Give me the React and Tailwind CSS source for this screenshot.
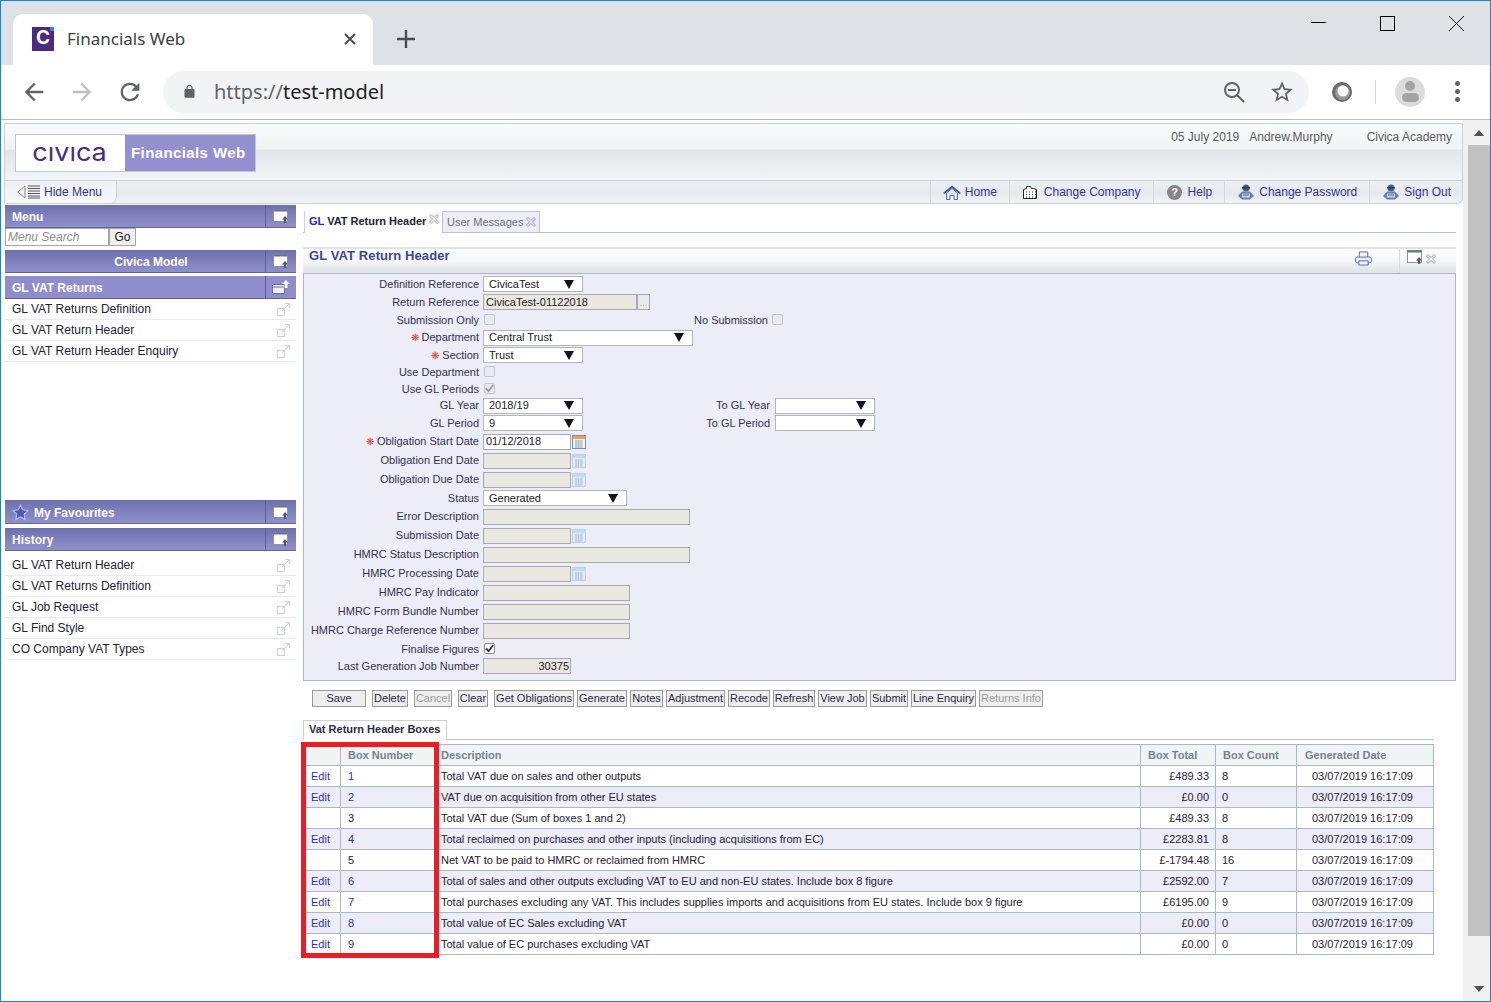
import React from "react";

const Ic = ({ d, className, fill = "currentColor" }) => (
  <svg viewBox="0 0 24 24" className={className} fill={fill}>
    <path d={d} />
  </svg>
);

const back = "M20 11H7.83l5.59-5.59L12 4l-8 8 8 8 1.41-1.41L7.83 13H20v-2z";
const forward = "M4 11h12.17l-5.59-5.59L12 4l8 8-8 8-1.41-1.41L16.17 13H4v-2z";
const reload = "M17.65 6.35C16.2 4.9 14.21 4 12 4c-4.42 0-7.99 3.58-7.99 8s3.57 8 7.99 8c3.73 0 6.84-2.55 7.73-6h-2.08c-.82 2.33-3.04 4-5.65 4-3.31 0-6-2.69-6-6s2.69-6 6-6c1.66 0 3.14.69 4.22 1.78L13 11h7V4l-2.35 2.35z";
const lock = "M18 8h-1V6c0-2.76-2.24-5-5-5S7 3.24 7 6v2H6c-1.1 0-2 .9-2 2v10c0 1.1.9 2 2 2h12c1.1 0 2-.9 2-2V10c0-1.1-.9-2-2-2zM9 6c0-1.66 1.34-3 3-3s3 1.34 3 3v2H9V6z";
const star = "M22 9.24l-7.19-.62L12 2 9.19 8.63 2 9.24l5.46 4.73L5.82 21 12 17.27 18.18 21l-1.63-7.03L22 9.24zM12 15.4l-3.76 2.27 1-4.28-3.32-2.88 4.38-.38L12 6.1l1.71 4.04 4.38.38-3.32 2.88 1 4.28L12 15.4z";

const WindowIcon = ({ flip }) => (
  <svg viewBox="0 0 16 14" className="w-[16px] h-[14px]">
    <rect x="0.5" y="0.5" width="14" height="12" fill="#fff" stroke="#8a8fa8" />
    <rect x="0.5" y="0.5" width="14" height="2" fill="#6b7088" />
    <path d={flip ? "M11 7v3H9l3 4 3-4h-2V7z" : "M12 7l3 3.500h-2V14h-2v-3.500H9z"} fill="#4d5878" />
  </svg>
);

const CloseX = ({ color = "#93a3bf" }) => (
  <svg viewBox="0 0 10 10" className="w-[10px] h-[10px] shrink-0" fill="none" stroke={color} strokeWidth="1">
    <path d="M2 .5L5 3.500 8 .5 9.500 2 6.500 5 9.500 8 8 9.500 5 6.500 2 9.500 .5 8 3.500 5 .5 2z" />
  </svg>
);

const ExtLink = () => (
  <svg viewBox="0 0 13 13" className="w-[13px] h-[13px] shrink-0" fill="none" stroke="#c8d3dd">
    <rect x="0.5" y="5.500" width="7" height="7" />
    <path d="M5 8L12 1M8 .5h4.500V5" />
  </svg>
);

const CalIcon = ({ on }) => (
  <svg viewBox="0 0 14 14" className="w-[14px] h-[14px] ml-[1px] shrink-0">
    <rect x="0.5" y="0.5" width="13" height="13" fill={on ? "#f4f6fa" : "#dfe9f8"} stroke={on ? "#6f93c6" : "#bcd0ee"} />
    <rect x="1" y="1" width="12" height="3" fill={on ? "#f0a050" : "#c6d8f2"} />
    <path d="M3 6h8M3 8h8M3 10h8M3 12h8M4 5v8M6.500 5v8M9 5v8" stroke={on ? "#9aa4b4" : "#b4c2d4"} strokeWidth="0.7" fill="none" />
  </svg>
);

const Person = () => (
  <svg viewBox="0 0 18 16" className="w-[18px] h-[16px]">
    <circle cx="9" cy="4" r="3.500" fill="#4d5a80" />
    <path d="M5 3h8v1.500H5z" fill="#2f3a5c" />
    <path d="M1 12l4-4.500h8l4 4.500-4 3.500H5z" fill="#6e7ea8" />
    <path d="M5 9.500h8v4H5z" fill="#cdd5e6" />
    <path d="M6 11h6" stroke="#4d5a80" />
  </svg>
);

const navItems = [
  {
    label: "Home",
    icon: (
      <svg viewBox="0 0 18 15" className="w-[18px] h-[15px]">
        <path d="M0 8l9-7.500L18 8l-1.500 1L9 3 1.500 9z" fill="#46558a" />
        <path d="M3.500 8L9 3.500 14.500 8v6.500h-3.500v-4H7v4H3.500z" fill="#dfe6f2" stroke="#5c6c9c" />
      </svg>
    ),
  },
  {
    label: "Change Company",
    icon: (
      <svg viewBox="0 0 15 14" className="w-[15px] h-[14px]" fill="#fff" stroke="#222">
        <path d="M.5 13.500v-9l3-1v-2h4l1 2h2l3 1v9z" />
        <path d="M3 7h1M6 7h1M9 7h1M12 7h1M3 9.500h1M6 9.500h1M9 9.500h1M12 9.500h1M3 12h1M6 12h1M9 12h1M12 12h1" />
      </svg>
    ),
  },
  {
    label: "Help",
    icon: (
      <span className="w-[15px] h-[15px] rounded-full bg-[#85858a] text-white text-[11px] font-bold flex items-center justify-center">?</span>
    ),
  },
  { label: "Change Password", icon: <Person /> },
  { label: "Sign Out", icon: <Person /> },
];

const menuItems = ["GL VAT Returns Definition", "GL VAT Return Header", "GL VAT Return Header Enquiry"];
const historyItems = ["GL VAT Return Header", "GL VAT Returns Definition", "GL Job Request", "GL Find Style", "CO Company VAT Types"];

const purple = "bg-[linear-gradient(#6e70ad,#8f8fcb)] border-b border-[#62649f]";

function SideHead({ title, height, center, leading, lightBg, icon }) {
  return (
    <div className={`${height} flex items-center text-white font-bold text-[12px] ${lightBg ? "bg-[#908dcc] border-b border-[#62649f]" : purple}`}>
      <div className={`flex-1 flex items-center gap-[5px] pt-[2px] ${center ? "justify-center pl-[32px]" : "pl-[7px]"}`}>
        {leading}
        {title}
      </div>
      <div className="w-[31px] h-full border-l border-[#5d5f9c] flex items-center justify-center">{icon || <WindowIcon />}</div>
    </div>
  );
}

function ItemList({ items }) {
  return (
    <div>
      {items.map((t) => (
        <div key={t} className="h-[21px] flex items-center justify-between pl-[7px] pr-[6px] border-b border-[#e6eaed] text-[#222233]">
          <span>{t}</span>
          <ExtLink />
        </div>
      ))}
    </div>
  );
}

const Select = ({ value, width }) => (
  <div className={`${width} h-[16px] bg-white border border-[#b4b4bc] flex items-center justify-between pl-[5px] pr-[8px] text-[#222]`}>
    <span>{value}</span>
    <svg viewBox="0 0 10 9" className="w-[10px] h-[9px]"><path d="M0 0h10L5 9z" fill="#111122" /></svg>
  </div>
);

const Input = ({ width, value, right, enabled }) => (
  <div className={`${width} h-[16px] border border-[#aaaaaa] flex items-center px-[2px] text-[#222] ${enabled ? "bg-white" : "bg-[#e9e8e1]"} ${right ? "justify-end pr-[1px]" : ""}`}>
    {value}
  </div>
);

const Check = ({ checked, strong }) => (
  <div className={`w-[11px] h-[11px] ml-[1px] mb-[2px] rounded-[2px] border flex items-center justify-center ${strong ? "bg-white border-[#888]" : "bg-[#e9e9f0] border-[#c4c4cc]"}`}>
    {checked && (
      <svg viewBox="0 0 10 10" className="w-[9px] h-[9px]" fill="none" stroke={strong ? "#333" : "#999"} strokeWidth="2"><path d="M1 5l3 3 5-7" /></svg>
    )}
  </div>
);

const DateField = ({ value, on }) => (
  <div className="flex items-center">
    <Input width="w-[88px]" value={value} enabled={on} />
    <CalIcon on={on} />
  </div>
);

const rows = [
  { h: "h-[18px]", label: "Definition Reference", field: <Select value="CivicaTest" width="w-[100px]" /> },
  {
    h: "h-[18px]",
    label: "Return Reference",
    field: (
      <div className="flex">
        <Input width="w-[154px]" value="CivicaTest-01122018" />
        <div className="w-[13px] h-[16px] border border-[#aaa] bg-[#e9e9ee] text-[#999] text-[9px] leading-[16px] text-center">...</div>
      </div>
    ),
  },
  { h: "h-[18px]", label: "Submission Only", field: <Check />, second: "No Submission", secondW: "w-[114px] mr-[3px]", secondField: <Check /> },
  { h: "h-[17px]", label: "Department", req: true, field: <Select value="Central Trust" width="w-[210px]" /> },
  { h: "h-[18px]", label: "Section", req: true, field: <Select value="Trust" width="w-[100px]" /> },
  { h: "h-[17px]", label: "Use Department", field: <Check /> },
  { h: "h-[16px]", label: "Use GL Periods", field: <Check checked /> },
  { h: "h-[17px]", label: "GL Year", field: <Select value="2018/19" width="w-[100px]" />, second: "To GL Year", secondW: "w-[116px] mr-[5px]", secondField: <Select value="" width="w-[100px]" /> },
  { h: "h-[18px]", label: "GL Period", field: <Select value="9" width="w-[100px]" />, second: "To GL Period", secondW: "w-[116px] mr-[5px]", secondField: <Select value="" width="w-[100px]" /> },
  { h: "h-[19px]", label: "Obligation Start Date", req: true, field: <DateField value="01/12/2018" on /> },
  { h: "h-[19px]", label: "Obligation End Date", field: <DateField /> },
  { h: "h-[19px]", label: "Obligation Due Date", field: <DateField /> },
  { h: "h-[18px]", label: "Status", field: <Select value="Generated" width="w-[144px]" /> },
  { h: "h-[19px]", label: "Error Description", field: <Input width="w-[207px]" /> },
  { h: "h-[19px]", label: "Submission Date", field: <DateField /> },
  { h: "h-[19px]", label: "HMRC Status Description", field: <Input width="w-[207px]" /> },
  { h: "h-[19px]", label: "HMRC Processing Date", field: <DateField /> },
  { h: "h-[19px]", label: "HMRC Pay Indicator", field: <Input width="w-[147px]" /> },
  { h: "h-[19px]", label: "HMRC Form Bundle Number", field: <Input width="w-[147px]" /> },
  { h: "h-[19px]", label: "HMRC Charge Reference Number", field: <Input width="w-[147px]" /> },
  { h: "h-[18px]", label: "Finalise Figures", field: <Check checked strong /> },
  { h: "h-[16px]", label: "Last Generation Job Number", field: <Input width="w-[88px]" value="30375" right /> },
];

const buttons = [
  { t: "Save", w: "w-[54px] mr-[6px]" },
  { t: "Delete", w: "w-[36px] mr-[6px]" },
  { t: "Cancel", w: "w-[38px] mr-[6px]", off: true },
  { t: "Clear", w: "w-[30px] mr-[6px]" },
  { t: "Get Obligations", w: "w-[80px] mr-[3px]" },
  { t: "Generate", w: "w-[50px] mr-[3px]" },
  { t: "Notes", w: "w-[33px] mr-[3px]" },
  { t: "Adjustment", w: "w-[59px] mr-[3px]" },
  { t: "Recode", w: "w-[42px] mr-[3px]" },
  { t: "Refresh", w: "w-[42px] mr-[3px]" },
  { t: "View Job", w: "w-[49px] mr-[3px]" },
  { t: "Submit", w: "w-[38px] mr-[3px]" },
  { t: "Line Enquiry", w: "w-[65px] mr-[3px]" },
  { t: "Returns Info", w: "w-[64px]", off: true },
];

const boxes = [
  { n: 1, edit: true, d: "Total VAT due on sales and other outputs", t: "£489.33", c: 8 },
  { n: 2, edit: true, d: "VAT due on acquisition from other EU states", t: "£0.00", c: 0 },
  { n: 3, d: "Total VAT due (Sum of boxes 1 and 2)", t: "£489.33", c: 8 },
  { n: 4, edit: true, d: "Total reclaimed on purchases and other inputs (including acquisitions from EC)", t: "£2283.81", c: 8 },
  { n: 5, d: "Net VAT to be paid to HMRC or reclaimed from HMRC", t: "£-1794.48", c: 16 },
  { n: 6, edit: true, d: "Total of sales and other outputs excluding VAT to EU and non-EU states. Include box 8 figure", t: "£2592.00", c: 7 },
  { n: 7, edit: true, d: "Total purchases excluding any VAT. This includes supplies imports and acquisitions from EU states. Include box 9 figure", t: "£6195.00", c: 9 },
  { n: 8, edit: true, d: "Total value of EC Sales excluding VAT", t: "£0.00", c: 0 },
  { n: 9, edit: true, d: "Total value of EC purchases excluding VAT", t: "£0.00", c: 0 },
];

const th = "border border-[#aab8c4] font-bold text-left text-[#75838f] text-[11px]";
const td = "border border-[#aab8c4] text-[#222233] text-[11px]";

export default function App() {
  return (
    <div className="w-[1491px] h-[1002px] overflow-hidden border border-[#1a86d0] bg-white flex flex-col [font-family:Liberation_Sans,Arial,sans-serif] text-[12px]">
      {/* browser tabs */}
      <div className="h-[64px] shrink-0 bg-[#dee1e6] flex items-end pl-[12px] relative">
        <div className="w-[360px] h-[51px] bg-white rounded-t-[10px] flex items-center pl-[19px] pr-[16px] [font-family:Noto_Sans,sans-serif] text-[#3c4043] text-[17px]">
          <div className="w-[22px] h-[24px] bg-[#4b2a80] flex items-center justify-center text-white [font-family:Inter,sans-serif] font-bold text-[19px] mr-[13px] mb-[2px] relative">
            C
            <span className="absolute right-0 top-0 w-[4px] h-[4px] bg-[#2b8fd8]"></span>
          </div>
          <span className="flex-1 mb-[1px]">Financials Web</span>
          <svg viewBox="0 0 12 12" className="w-[12px] h-[12px] mr-[1px] mb-[1px]" stroke="#4a4d51" strokeWidth="2"><path d="M1 1l10 10M11 1L1 11" /></svg>
        </div>
        <svg viewBox="0 0 18 18" className="w-[18px] h-[18px] ml-[24px] mb-[17px]" stroke="#4a4d51" strokeWidth="2.400"><path d="M9 0v18M0 9h18" /></svg>
        <div className="flex-1"></div>
        <div className="flex items-start self-start mt-[15px] pr-[26px]">
          <div className="w-[15px] h-[1px] bg-black mt-[6px]"></div>
          <div className="w-[15px] h-[15px] border border-black ml-[54px]"></div>
          <svg viewBox="0 0 15 15" className="w-[15px] h-[15px] ml-[54px]" stroke="#111" fill="none"><path d="M0 0l15 15M15 0L0 15" /></svg>
        </div>
      </div>

      {/* browser toolbar */}
      <div className="h-[55px] shrink-0 border-b border-[#b9bcc0] flex items-center pl-[9px] pb-[1px]">
        <div className="w-[48px] flex justify-center"><Ic d={back} className="w-[28px] h-[28px] text-[#5f6368]" /></div>
        <div className="w-[48px] flex justify-center"><Ic d={forward} className="w-[28px] h-[28px] text-[#bdc1c6]" /></div>
        <div className="w-[48px] flex justify-center"><Ic d={reload} className="w-[28px] h-[28px] text-[#5f6368]" /></div>
        <div className="ml-[9px] w-[1146px] h-[42px] rounded-full bg-[#f1f3f4] flex items-center pl-[19px] pr-[14px]">
          <Ic d={lock} className="w-[15px] h-[17px] text-[#5f6368] mr-[17px]" />
          <span className="flex-1 [font-family:Noto_Sans,sans-serif] text-[20px] pt-[1px] text-[#202124]"><span className="text-[#5f6368]">https://</span>test-model</span>
          <svg viewBox="0 0 22 22" className="w-[22px] h-[22px] mr-[24px]" fill="none" stroke="#5f6368" strokeWidth="2">
            <circle cx="9" cy="9" r="7" /><path d="M5 9h8M14 14l7 7" />
          </svg>
          <Ic d={star} className="w-[26px] h-[26px] text-[#5f6368]" />
        </div>
        <svg viewBox="0 0 20 20" className="w-[20px] h-[20px] ml-[23px]">
          <circle cx="10" cy="10" r="10" fill="#6a6a6a" />
          <circle cx="10.500" cy="10.500" r="7.500" fill="#9a9a9a" />
          <circle cx="11" cy="9" r="5.500" fill="#f8f8f8" />
        </svg>
        <div className="w-[1px] h-[24px] bg-[#d5d7da] ml-[23px]"></div>
        <div className="w-[30px] h-[30px] rounded-full bg-[#dcdcdc] ml-[19px] flex flex-col items-center justify-center gap-[2px]">
          <span className="w-[10px] h-[10px] rounded-full bg-[#a4a4a4]"></span>
          <span className="w-[17px] h-[9px] rounded-full bg-[#a4a4a4]"></span>
        </div>
        <div className="ml-[30px] flex flex-col gap-[3px]">
          <span className="w-[5px] h-[5px] rounded-full bg-[#5f6368]"></span>
          <span className="w-[5px] h-[5px] rounded-full bg-[#5f6368]"></span>
          <span className="w-[5px] h-[5px] rounded-full bg-[#5f6368]"></span>
        </div>
      </div>

      {/* page */}
      <div className="flex-1 flex min-h-0">
        <div className="w-[1462px] pl-[3px] pt-[3px]">
          {/* app header */}
          <div className="w-[1459px] h-[58px] border border-[#c7d2da] bg-[linear-gradient(#f9fbfb_0%,#f0f3f5_45%,#e1e5e9_47%,#f3f5f7_100%)] flex pl-[10px] pr-[10px] relative">
            <div className="flex mt-[10px] h-[38px] border border-[#bcc9d6]">
              <div className="w-[109px] bg-white flex items-center justify-center [font-family:Inter,sans-serif] text-[25px] text-[#4a2c7e] leading-none pb-[1px] pr-[2px] overflow-hidden"><span className="scale-x-[1.08]">cıvıca</span></div>
              <div className="w-[130px] bg-[#9490cf] flex items-center pl-[6px] pt-[1px] text-white text-[15px] font-bold tracking-[0.4px]">Financials Web</div>
            </div>
            <div className="flex-1"></div>
            <div className="flex pt-[4px] text-[#5a5a60] h-fit">
              <span>05 July 2019</span>
              <span className="ml-[10px]">Andrew.Murphy</span>
              <span className="ml-[34px]">Civica Academy</span>
            </div>
          </div>

          {/* nav bar */}
          <div className="w-[1459px] h-[23px] border-x border-b border-[#c7d2da] rounded-br-[6px] bg-[linear-gradient(#eef1f3_0%,#e5e8ec_50%,#f1f3f5_100%)] flex items-center justify-between text-[#33358f]">
            <div className="w-[112px] h-full border-r border-[#c7d2da] rounded-b-[6px] flex items-center pl-[12px] gap-[3px] bg-[linear-gradient(#eef1f3,#f7f8f9)]">
              <svg viewBox="0 0 24 14" className="w-[24px] h-[14px]" fill="none" stroke="#555"><path d="M1 7l7-6v12z" stroke="#888" /><path d="M11 1h12M11 3.500h12M11 6h12M11 8.500h12M11 11h12M11 13h12" strokeWidth="1.200" /></svg>
              Hide Menu
            </div>
            <div className="flex h-full">
              {navItems.map((n) => (
                <div key={n.label} className="flex items-center gap-[4px] border-l border-[#d3dade] px-[12px] last:pr-[11px]">
                  <span className="w-[18px] flex justify-center">{n.icon}</span>
                  {n.label}
                </div>
              ))}
            </div>
          </div>

          <div className="flex">
            {/* left menu */}
            <div className="w-[291px] ml-[1px] mt-[1px]">
              <SideHead title="Menu" height="h-[23px]" />
              <div className="h-[18px] flex">
                <div className="w-[104px] h-full border border-[#a5a5a5] italic text-[#8c8c8c] pl-[2px] leading-[16px]">Menu Search</div>
                <div className="w-[27px] h-full bg-[#efefef] border border-[#a5a5a5] text-[#222] text-center leading-[16px]">Go</div>
              </div>
              <div className="mt-[4px]"><SideHead title="Civica Model" height="h-[23px]" center /></div>
              <div className="mt-[3px]">
                <SideHead
                  title="GL VAT Returns"
                  height="h-[23px]"
                  lightBg
                  icon={
                    <svg viewBox="0 0 18 14" className="w-[18px] h-[14px]"><path d="M.5 4.500h12v9H.5z" fill="#eef0f6" stroke="#6a6c98" /><path d="M.5 7h12" stroke="#6a6c98" /><path d="M14 0l4 4h-2.500v4h-3V4H10z" fill="#fff" /></svg>
                  }
                />
              </div>
              <ItemList items={menuItems} />
              <div className="mt-[138px]">
                <SideHead
                  title="My Favourites"
                  height="h-[24px]"
                  leading={
                    <svg viewBox="0 0 24 24" className="w-[17px] h-[17px]"><path d="M12 1.500l3.200 6.800 7.300 1-5.300 5.200 1.300 7.500L12 18.300 5.500 22l1.300-7.500L1.500 9.300l7.300-1z" fill="#5058b8" stroke="#b6c4e8" strokeWidth="1.500" /></svg>
                  }
                />
              </div>
              <div className="mt-[4px]"><SideHead title="History" height="h-[23px]" /></div>
              <div className="mt-[4px]"><ItemList items={historyItems} /></div>
            </div>

            {/* main column */}
            <div className="w-[1153px] ml-[7px] mt-[7px]">
              <div className="flex h-[22px] border-b border-[#b5c0ca] pl-[1px] text-[11px]">
                <div className="w-[138px] h-[22px] bg-white border-l border-[#c7d2da] flex items-start pl-[4px] pt-[2px] gap-[3px] text-[#222233] whitespace-nowrap">
                  <span className="font-bold"><span className="text-[#2222dd]">GL</span> VAT Return Header</span>
                  <span className="mt-[1px]"><CloseX /></span>
                </div>
                <div className="w-[98px] h-[22px] bg-[#ecedf7] border border-[#b9c3d4] flex items-center pl-[4px] gap-[3px] text-[#6b7080] whitespace-nowrap">
                  User Messages
                  <CloseX />
                </div>
              </div>

              <div className="mt-[14px] h-[26px] border-t-2 border-[#dfe3e7] bg-[linear-gradient(#fbfcfc_0%,#f5f6f8_50%,#e6e9ec_80%,#e2e5e8_100%)] flex items-start text-[13px] tracking-[0.1px] font-bold text-[#40478f] pl-[6px]">
                <span className="flex-1 leading-[14px]">GL VAT Return Header</span>
                <svg viewBox="0 0 18 16" className="w-[17px] h-[15px] mr-[27px] mt-[2px]" fill="#eef0f7" stroke="#5d6a98"><path d="M4.500 7V1h9v6" /><rect x="0.5" y="6.500" width="17" height="6" rx="1.500" /><path d="M4 10.500h10v4.500H4z" /></svg>
                <div className="w-[1px] self-stretch bg-[#d5dade]"></div>
                <div className="ml-[7px] mr-[20px] mt-[1px] flex items-end gap-[3px]"><WindowIcon /><CloseX /></div>
              </div>

              <div className="h-[408px] border border-[#a9b8c8] bg-[#ecedf7] pt-[1px] text-[11px]">
                {rows.map((r) => (
                  <div key={r.label} className={`${r.h} flex items-center`}>
                    <div className="w-[175px] text-right text-[#33334a] whitespace-nowrap">
                      {r.req && <span className="text-[#e04030] text-[10px] mr-[3px]">❋</span>}
                      {r.label}
                    </div>
                    <div className="w-[171px] ml-[4px] shrink-0">{r.field}</div>
                    {r.second && (
                      <div className={`${r.secondW} text-right text-[#33334a] shrink-0`}>{r.second}</div>
                    )}
                    {r.second && r.secondField}
                  </div>
                ))}
              </div>

              {/* action buttons */}
              <div className="flex mt-[9px] pl-[9px] text-[11px]">
                {buttons.map((b) => (
                  <div key={b.t} className={`${b.w} h-[17px] shrink-0 border border-[#9a9a9a] bg-[#eeeeee] text-center leading-[15px] whitespace-nowrap ${b.off ? "text-[#9b9b9b]" : "text-[#2a2a44]"}`}>
                    {b.t}
                  </div>
                ))}
              </div>

              <div className="mt-[13px] w-[1130px] h-[20px] border-b border-[#b5c0ca]">
                <div className="w-[144px] h-[20px] bg-white border-l border-t border-r border-[#c7d2da] font-bold text-[#2a2a44] text-[11px] pl-[5px] leading-[16px]">Vat Return Header Boxes</div>
              </div>

              {/* boxes table */}
              <div className="relative mt-[4px] w-[1130px]">
                <table className="table-fixed w-[1130px] border-collapse">
                  <colgroup>
                    <col className="w-[37px]" />
                    <col className="w-[97px]" />
                    <col className="w-[703px]" />
                    <col className="w-[75px]" />
                    <col className="w-[81px]" />
                    <col className="w-[137px]" />
                  </colgroup>
                  <thead>
                    <tr className="h-[21px] bg-[#f1f4f5]">
                      <th className={th}></th>
                      <th className={`${th} pl-[7px]`}>Box Number</th>
                      <th className={`${th} pl-[3px]`}>Description</th>
                      <th className={`${th} pl-[7px]`}>Box Total</th>
                      <th className={`${th} pl-[7px]`}>Box Count</th>
                      <th className={`${th} pl-[8px]`}>Generated Date</th>
                    </tr>
                  </thead>
                  <tbody>
                    {boxes.map((b, i) => (
                      <tr key={b.n} className={`h-[21px] ${i % 2 ? "bg-[#ecedf7]" : "bg-white"}`}>
                        <td className={`${td} pl-[7px]`}>{b.edit && <span className="text-[#2b32b8]">Edit</span>}</td>
                        <td className={`${td} pl-[7px]`}><span className={b.edit ? "text-[#2b32b8]" : ""}>{b.n}</span></td>
                        <td className={`${td} pl-[3px] whitespace-nowrap`}>{b.d}</td>
                        <td className={`${td} text-right pr-[6px]`}>{b.t}</td>
                        <td className={`${td} pl-[6px]`}>{b.c}</td>
                        <td className={`${td} pl-[15px]`}>03/07/2019 16:17:09</td>
                      </tr>
                    ))}
                  </tbody>
                </table>
                {/* annotation drawn over the table */}
                <div className="absolute -left-[2px] -top-[2px] w-[138px] h-[216px] border-[5px] border-[#ed1c24] pointer-events-none"></div>
              </div>
            </div>
          </div>
        </div>

        {/* page scrollbar */}
        <div className="w-[27px] bg-[#f1f1f1] pl-[5px] flex flex-col items-center">
          <div className="h-[25px] w-full flex items-center justify-center">
            <svg viewBox="0 0 10 6" className="w-[10px] h-[6px]"><path d="M5 0l5 6H0z" fill="#505050" /></svg>
          </div>
          <div className="h-[791px] w-full bg-[#c1c1c1]"></div>
          <div className="flex-1 w-full flex items-end justify-center pb-[9px]">
            <svg viewBox="0 0 10 6" className="w-[10px] h-[6px]"><path d="M5 6L0 0h10z" fill="#505050" /></svg>
          </div>
        </div>
      </div>
    </div>
  );
}
